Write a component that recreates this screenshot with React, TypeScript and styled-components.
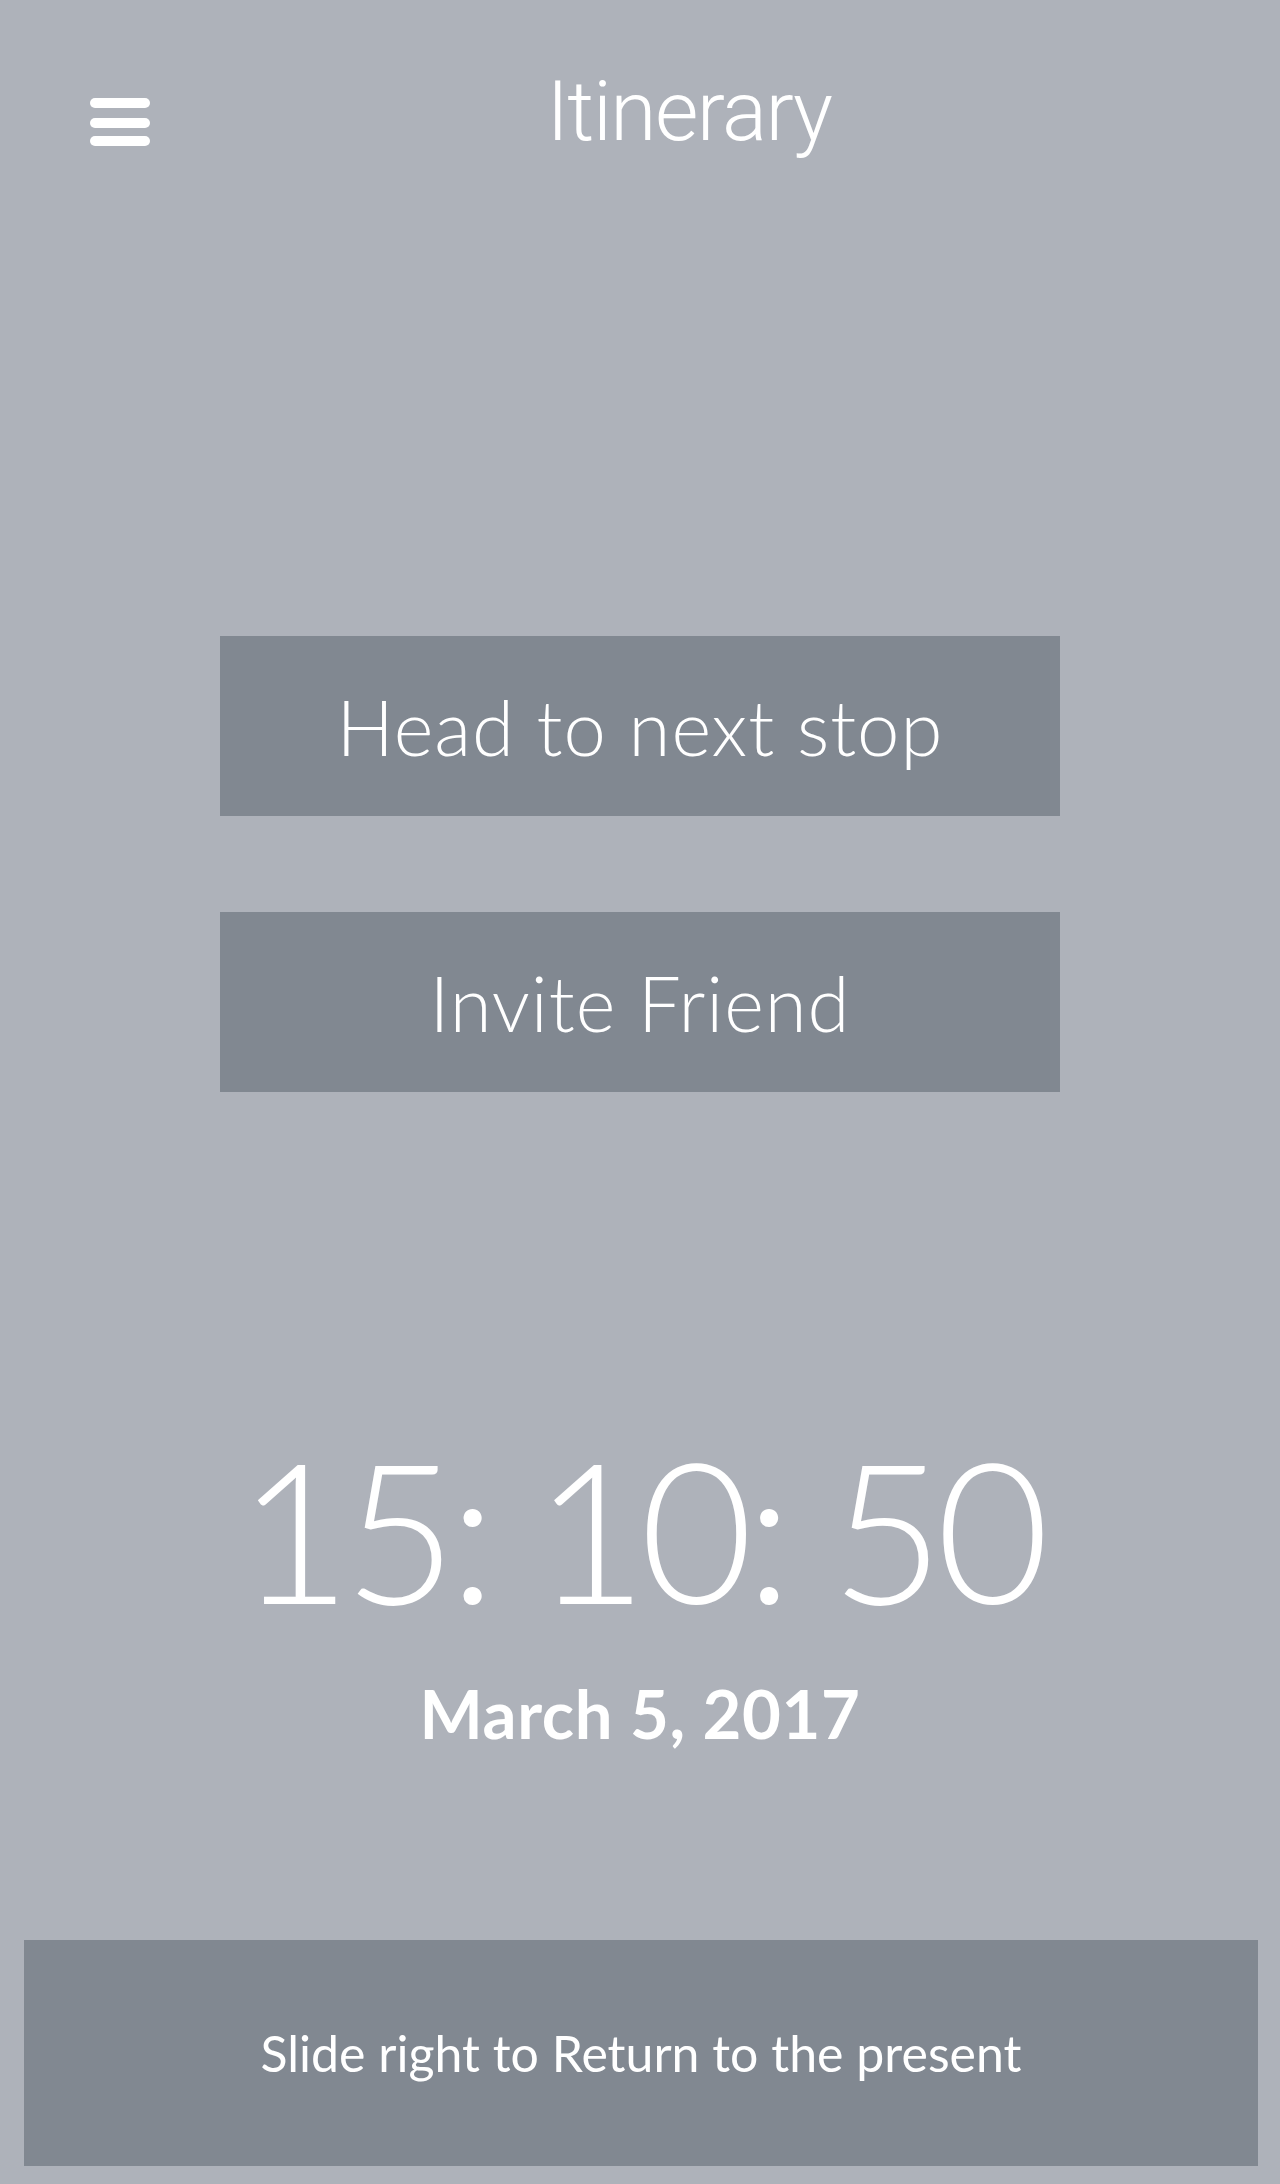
import React from 'react';
import styled, { createGlobalStyle } from 'styled-components';

const GlobalStyle = createGlobalStyle`
  html, body {
    margin: 0;
    padding: 0;
    background: #aeb2ba;
  }
  body {
    font-family: Lato, "Open Sans", sans-serif;
    color: #ffffff;
  }
`;

const Page = styled.div`
  width: 1280px;
  height: 2184px;
  background: #aeb2ba;
  display: flex;
  flex-direction: column;
  box-sizing: border-box;
  overflow: hidden;
`;

const Header = styled.header`
  height: 200px;
  display: flex;
  align-items: flex-start;
  padding: 0 52px 0 90px;
`;

const MenuButton = styled.button`
  width: 60px;
  height: 48px;
  margin-top: 98px;
  padding: 0;
  border: none;
  background: none;
  display: flex;
`;

const Title = styled.h1`
  flex: 1;
  margin: 70px 0 0;
  text-align: center;
  font-family: Roboto, "Liberation Sans", sans-serif;
  font-weight: 300;
  font-size: 84px;
  line-height: 1;
  letter-spacing: -1.5px;
  color: #ffffff;
`;

const Actions = styled.div`
  display: flex;
  flex-direction: column;
  align-items: center;
  gap: 96px;
  margin-top: 436px;
`;

const ActionButton = styled.button`
  width: 840px;
  height: 180px;
  border: none;
  background: #818891;
  color: #ffffff;
  font-family: Lato, "Open Sans", sans-serif;
  font-weight: 300;
  font-size: 76px;
  letter-spacing: 1px;
  padding: 0;
`;

const Clock = styled.div`
  margin-top: 340px;
  text-align: center;
  font-family: Lato, sans-serif;
  font-weight: 300;
  font-size: 195px;
  line-height: 1;
  letter-spacing: -7.4px;
`;

const DateText = styled.div`
  margin-top: 53px;
  text-align: center;
  font-family: Lato, sans-serif;
  font-weight: 700;
  font-size: 67px;
  line-height: 1;
  letter-spacing: 0.6px;
`;

const SlideBar = styled.div`
  margin: auto 22px 18px 24px;
  height: 226px;
  background: #818891;
  display: flex;
  align-items: center;
  justify-content: center;
  font-family: Lato, sans-serif;
  font-weight: 400;
  font-size: 50px;
`;

const MenuIcon = () => (
  <svg width="60" height="48" viewBox="0 0 60 48" fill="#ffffff">
    <rect x="0" y="0" width="60" height="10" rx="5" />
    <rect x="0" y="20" width="60" height="10" rx="5" />
    <rect x="0" y="38" width="60" height="10" rx="5" />
  </svg>
);

const App: React.FC = () => {
  return (
    <Page>
      <GlobalStyle />
      <Header>
        <MenuButton aria-label="Menu">
          <MenuIcon />
        </MenuButton>
        <Title>Itinerary</Title>
      </Header>
      <Actions>
        <ActionButton>Head to next stop</ActionButton>
        <ActionButton>Invite Friend</ActionButton>
      </Actions>
      <Clock>15: 10: 50</Clock>
      <DateText>March 5, 2017</DateText>
      <SlideBar>Slide right to Return to the present</SlideBar>
    </Page>
  );
};

export default App;
